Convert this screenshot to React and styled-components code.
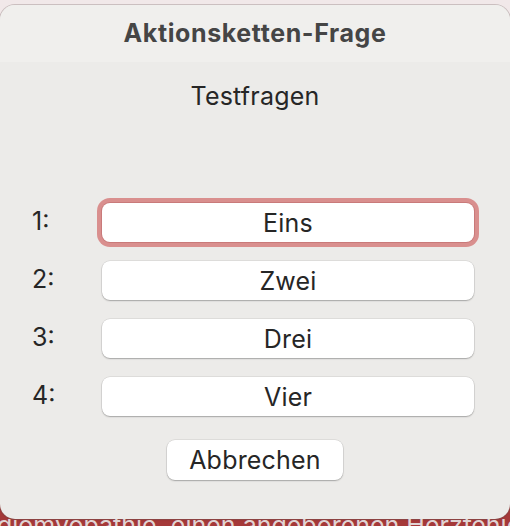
import React from 'react';
import styled, { createGlobalStyle } from 'styled-components';

const GlobalStyle = createGlobalStyle`
  html, body {
    margin: 0;
    padding: 0;
    width: 510px;
    height: 526px;
    overflow: hidden;
  }
  body {
    font-family: 'Inter', 'Liberation Sans', sans-serif;
    background: linear-gradient(to bottom, #f1e8e9 0, #f1e8e9 260px, #a53939 260px, #a53939 100%);
  }
`;

const Page = styled.div`
  display: flex;
  flex-direction: column;
  width: 510px;
  height: 526px;
  padding-top: 5px;
  box-sizing: border-box;
  overflow: hidden;
`;

const Sheet = styled.div`
  display: flex;
  flex-direction: column;
  height: 514px;
  box-sizing: border-box;
  background: #ecebe9;
  border-radius: 15px;
  box-shadow: 0 0 0 1px rgba(120, 100, 100, 0.3), 0 1px 2px rgba(0, 0, 0, 0.12);
  overflow: hidden;
  flex-shrink: 0;
`;

const TitleBar = styled.div`
  height: 57px;
  display: flex;
  align-items: center;
  justify-content: center;
  background: #f0efed;
  font-size: 25px;
  font-weight: 700;
  color: #454545;
  letter-spacing: 0.6px;
  padding-bottom: 2px;
  box-sizing: border-box;
`;

const Subtitle = styled.div`
  margin-top: 20px;
  height: 28px;
  line-height: 28px;
  text-align: center;
  font-size: 25px;
  letter-spacing: 0.2px;
  color: #262626;
`;

const Rows = styled.div`
  margin-top: 93px;
  padding-left: 32px;
  display: flex;
  flex-direction: column;
  gap: 19px;
`;

const Row = styled.div`
  display: grid;
  grid-template-columns: 70px 372px;
  align-items: center;
  height: 39px;
`;

const Label = styled.div`
  font-size: 25px;
  color: #262626;
  margin-top: -4px;
`;

const Choice = styled.div`
  height: 39px;
  border-radius: 8px;
  background: #ffffff;
  display: flex;
  align-items: center;
  justify-content: center;
  font-size: 25px;
  letter-spacing: 0.2px;
  color: #262626;
  box-shadow: ${(p) =>
    p.focused
      ? '0 0 0 1px #c97a7a, 0 0 0 5px #d98f8e'
      : '0 0 0 0.5px rgba(0, 0, 0, 0.12), 0 1px 1.5px rgba(0, 0, 0, 0.25)'};
`;

const Footer = styled.div`
  margin-top: 24px;
  display: flex;
  justify-content: center;
`;

const CancelButton = styled.div`
  width: 176px;
  height: 40px;
  border-radius: 8px;
  background: #ffffff;
  display: flex;
  align-items: center;
  justify-content: center;
  font-size: 25px;
  letter-spacing: 0.2px;
  color: #262626;
  box-shadow: 0 0 0 0.5px rgba(0, 0, 0, 0.12), 0 1px 1.5px rgba(0, 0, 0, 0.25);
`;

const Behind = styled.div`
  height: 8px;
  overflow: hidden;
`;

const BehindText = styled.div`
  margin-top: -9px;
  margin-left: -3px;
  white-space: nowrap;
  font-size: 25px;
  line-height: 30px;
  color: #e0d4d4;
`;

const options = ['Eins', 'Zwei', 'Drei', 'Vier'];

const App = () => {
  return (
    <>
      <GlobalStyle />
      <Page>
        <Sheet>
          <TitleBar>Aktionsketten-Frage</TitleBar>
          <Subtitle>Testfragen</Subtitle>
          <Rows>
            {options.map((o, i) => (
              <Row key={o}>
                <Label>{i + 1}:</Label>
                <Choice focused={i === 0}>{o}</Choice>
              </Row>
            ))}
          </Rows>
          <Footer>
            <CancelButton>Abbrechen</CancelButton>
          </Footer>
        </Sheet>
        <Behind>
          <BehindText>diomyopathie, einen angeborenen Herzfehler</BehindText>
        </Behind>
      </Page>
    </>
  );
};

export default App;
